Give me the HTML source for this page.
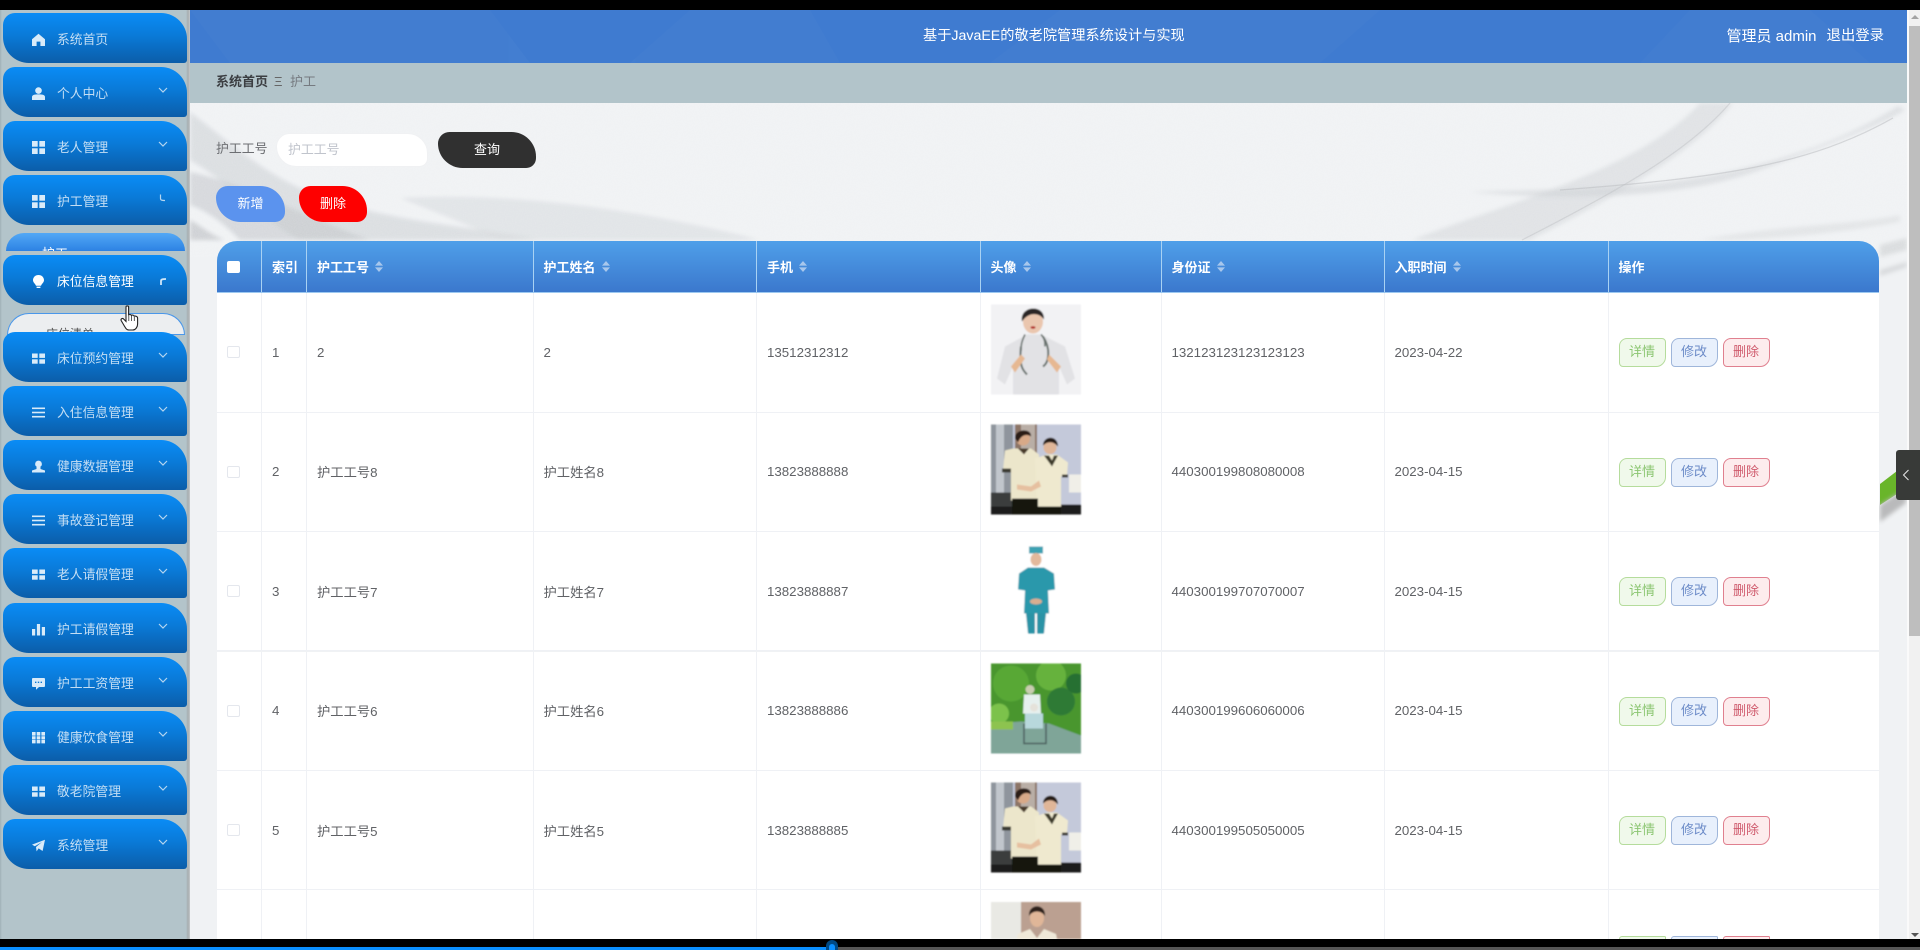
<!DOCTYPE html>
<html lang="zh-CN"><head><meta charset="utf-8"><title>护工</title>
<style>
*{box-sizing:border-box}
html,body{margin:0;padding:0;width:1920px;height:950px;overflow:hidden;background:#000}
body{position:relative;font-family:"Liberation Sans","Noto Sans CJK SC",sans-serif;font-size:13.3px;color:#606266}
.abs{position:absolute}
#side{position:absolute;left:0;top:10px;width:190px;height:929px;background:linear-gradient(90deg,#9fb0b6 0,#b3c4ca 2px,#b3c4ca 186px,#a7adb0 188px,#c4c8ca 190px)}
.m{position:absolute;left:3px;width:184px;height:50px;border-radius:12px 26px 3px 26px;background:linear-gradient(180deg,#0a8cf6 0,#0a7ad8 45%,#0b5da9 100%);color:#c4def4;font-size:12.8px;line-height:54px;padding-left:54px;white-space:nowrap}
.m svg.i{position:absolute;left:29px;top:20px;width:13px;height:13px;fill:#d9ebf9}
.m svg.c{position:absolute;left:155px;top:18px;width:10px;height:10px;fill:none;stroke:#b5d6f0;stroke-width:1.2}
.sub{position:absolute;overflow:hidden;font-size:13px}
#head{position:absolute;left:190px;top:10px;width:1717px;height:53px;background:#3f7bd0;overflow:hidden}
#crumb{position:absolute;left:190px;top:63px;width:1717px;height:40px;background:#b2c4ca}
#bg{position:absolute;left:190px;top:103px;width:1717px;height:836px;background:#f0f2f4;overflow:hidden}
.row,.hd{position:absolute;left:217px;width:1662px;display:grid;grid-template-columns:45px 45px 226.5px 223.5px 223.5px 181px 223px 224px 270.5px}
.row{height:119.4px;background:#fff;border-bottom:1px solid #eff1f5}
.row>div{border-right:1px solid #eff1f5;display:flex;align-items:center;padding-left:10px;white-space:nowrap}
.row>div:last-child{border-right:0;gap:5px;padding-top:1px}
.row.last{height:48.7px;border-bottom:0;overflow:hidden}
.row.last>div{align-items:flex-start;padding-top:0}
.row.last>div:last-child{padding-top:45.7px}
.row.last .b{height:3px;border-bottom:0;border-radius:8px 4px 0 0}
.hd{top:241px;height:52.3px;border-radius:20px 20px 0 0;background:linear-gradient(180deg,#4f9fe9 0,#3b78cd 100%);border-bottom:1px solid #9cc8f0;overflow:hidden;color:#fff;font-weight:bold;font-size:13px}
.hd>div{border-right:1px solid #a9d2f3;display:flex;align-items:center;padding-left:10px;white-space:nowrap}
.hd>div:last-child{border-right:0}
.s{display:inline-block;width:8px;height:11px;margin-left:6px}
.cb{width:13px;height:12px;border:1px solid #e4e7ed;border-radius:2px;background:#fff;display:block}
.hcb{background:#fff;border-color:#fff}
.b{display:block;width:47px;height:29px;border:1px solid;border-radius:8px 4px 10px 4px;text-align:center;line-height:26px;font-size:13px}
.g{background:#f0f9eb;border-color:#b5dc9c;color:#8cc672}
.u{background:#e8f0fc;border-color:#9fb6da;color:#6c8bc8}
.r{background:#fdeced;border-color:#e0808f;color:#cf5a6c}
.row svg.p{display:block;width:90px;height:90px;transform:translateY(-2.5px)}
.btn{position:absolute;height:36px;color:#fff;text-align:center;line-height:36px;font-size:13px;border-radius:14px 30px 12px 30px}
</style></head><body>
<svg width="0" height="0" style="position:absolute">
<defs>
<filter id="bl"><feGaussianBlur stdDeviation="0.7"/></filter>
<filter id="w"><feGaussianBlur stdDeviation="2.2"/></filter>
<filter id="n"><feTurbulence type="fractalNoise" baseFrequency="0.9" numOctaves="2" seed="4"/><feColorMatrix values="0 0 0 0 1  0 0 0 0 1  0 0 0 0 1  0 0 0 .55 -.12"/></filter>
<symbol id="grid" viewBox="0 0 13 13"><rect x="0" y="0" width="5.7" height="5.7"/><rect x="7.3" y="0" width="5.7" height="5.7"/><rect x="0" y="7.3" width="5.7" height="5.7"/><rect x="7.3" y="7.3" width="5.7" height="5.7"/></symbol>
<symbol id="wide" viewBox="0 0 13 13"><rect x="0" y="1.5" width="5.7" height="4.4"/><rect x="7.3" y="1.5" width="5.7" height="4.4"/><rect x="0" y="7.3" width="5.7" height="4.4"/><rect x="7.3" y="7.3" width="5.7" height="4.4"/></symbol>
<symbol id="ops" viewBox="0 0 13 13"><rect x="0" y="1.5" width="13" height="1.6"/><rect x="0" y="5.7" width="13" height="1.6"/><rect x="0" y="9.9" width="13" height="1.6"/></symbol>
<symbol id="couple" viewBox="0 0 90 90">
<rect width="90" height="90" fill="#c4c9da"/><rect width="22" height="90" fill="#8f959d"/><rect x="5" width="8" height="80" fill="#c1c6cc"/><rect x="24" width="22" height="35" fill="#8c7466"/><rect x="30" width="14" height="30" fill="#b9aea6"/>
<rect x="78" y="50" width="12" height="18" fill="#f0efe8"/>
<rect x="0" y="80" width="90" height="10" fill="#1d1e1c"/><rect x="0" y="68" width="22" height="14" fill="#3a3d3c"/>
<path d="M14 26 L22 24 L40 24 L48 30 L47 76 L20 76 L20 46 L12 46Z" fill="#ece6cb"/>
<rect x="11" y="44" width="9" height="4" fill="#3a3a30"/>
<path d="M44 34 L56 30 L66 30 L77 38 L76 51 L70 52 L70 82 L46 82Z" fill="#efe9cf"/>
<rect x="71" y="50" width="6" height="3" fill="#3a3a30"/>
<path d="M53 31 L61 42 L67 31 L63 31 L61 36 L58 31Z" fill="#3d3b2c"/>
<path d="M27 24 L33 30 L38 24Z" fill="#4a3b2c"/>
<circle cx="32" cy="14" r="7" fill="#d8a988"/><path d="M24 14 C23 4 41 3 40 12 C36 9 30 10 27 18Z" fill="#2c1d18"/>
<circle cx="59" cy="23" r="6.5" fill="#e0b698"/><path d="M52 21 C52 11 67 10 67 22 C63 17 57 16 52 21Z" fill="#261c18"/>
<rect x="21" y="74" width="26" height="16" fill="#121210"/><rect x="46" y="82" width="24" height="8" fill="#121210"/>
<path d="M26 60 L40 62 L48 56 L50 62 L40 67 L26 65Z" fill="#e6c0a0"/>
</symbol>
</defs>
</svg>

<!-- content background -->
<div id="bg">
<svg width="1717" height="836" viewBox="190 103 1717 836" style="position:absolute;left:0;top:0">
<g filter="url(#w)" opacity=".95">
<path d="M190 112 C240 150 270 180 330 200 C400 222 460 225 540 240 L300 240 C270 225 240 190 190 160Z" fill="#c9ccd0" opacity=".55"/>
<path d="M190 172 C250 185 300 215 370 240 L240 240 C225 225 210 212 190 205Z" fill="#c2c5c9" opacity=".6"/>
<path d="M190 220 C200 225 210 235 225 240 L190 240Z" fill="#b5b8bc" opacity=".6"/>
<path d="M400 198 C520 192 640 210 760 240 L500 240 C470 225 430 210 400 198Z" fill="#d6d9dc" opacity=".6"/>
</g>
<g filter="url(#w)" opacity=".7">
<path d="M1733 103 C1700 145 1640 185 1530 240 L1412 240 C1500 205 1640 170 1700 103Z" fill="#c5c8cc" opacity=".55"/>
<path d="M1898 106 C1830 150 1740 175 1640 185 C1590 190 1520 190 1470 192 C1560 200 1680 200 1760 170 C1830 145 1880 125 1905 110Z" fill="#bfc2c6" opacity=".55"/>
<path d="M1880 245 L1907 238 L1907 250 L1880 257Z" fill="#b6b9bc" opacity=".55"/>
<path d="M1880 270 L1907 262 L1907 267 L1880 276Z" fill="#b0b3b6" opacity=".55"/>
<path d="M1700 240 C1780 225 1850 225 1900 215 L1900 222 C1830 235 1780 238 1730 240Z" fill="#d0d3d6" opacity=".6"/>
</g>
<path d="M1730 103 C1690 150 1620 190 1522 240" stroke="#bdc0c4" stroke-width="1.2" fill="none" opacity=".5"/>
<path d="M1893 118 C1810 165 1720 178 1560 190" stroke="#b5b8bc" stroke-width="1.2" fill="none" opacity=".5"/>
<path d="M1880 484 L1897 471 L1897 494 L1880 505Z" fill="#69b52a"/>
<path d="M1880 505 L1906 488 L1906 503 L1880 522Z" fill="#b9babb" filter="url(#w)"/>
<rect x="190" y="103" width="1717" height="140" filter="url(#n)" opacity=".35"/>
</svg>
</div>

<!-- header -->
<div id="head">
<svg width="1717" height="53" style="position:absolute;left:0;top:0"><g fill="#fff" opacity=".02"><path d="M0 0H300L340 53H40Z"/><path d="M500 0H620L650 53H440Z"/><path d="M870 0H1190L1130 53H800Z"/><path d="M1500 0H1620L1680 53H1450Z"/></g></svg>
<div class="abs" style="left:733px;top:0;line-height:53px;font-size:14.2px;color:#fff;white-space:nowrap">基于JavaEE的敬老院管理系统设计与实现</div>
<div class="abs" style="left:1536.5px;top:0;line-height:53px;font-size:15px;color:#fff;white-space:nowrap">管理员 admin</div>
<div class="abs" style="left:1636.5px;top:0;line-height:53px;font-size:14.4px;color:#fff;white-space:nowrap">退出登录</div>
</div>
<div id="crumb">
<span class="abs" style="left:26px;top:0;line-height:38px;font-size:13px;font-weight:bold;color:#3b3e42;white-space:nowrap">系统首页</span>
<span class="abs" style="left:84px;top:0;line-height:38px;font-size:13px;color:#666">Ξ</span>
<span class="abs" style="left:100px;top:0;line-height:38px;font-size:13px;color:#757a80;white-space:nowrap">护工</span>
</div>

<!-- search -->
<span class="abs" style="left:216px;top:140px;line-height:18px;font-size:12.9px;color:#6c6e72">护工工号</span>
<div class="abs" style="left:276px;top:133px;width:152px;height:34px;background:#fff;border-radius:16px 24px 10px 24px;border:1px solid #f0f1f3;color:#c0c4cc;font-size:12.9px;line-height:32px;padding-left:11px">护工工号</div>
<div class="btn" style="left:438px;top:132px;width:98px;background:#303030">查询</div>
<div class="btn" style="left:216px;top:186px;width:69px;background:#5b93ee">新增</div>
<div class="btn" style="left:299px;top:186px;width:68px;background:#fe0000">删除</div>

<!-- table head -->
<div class="hd">
<div><i class="cb hcb"></i></div>
<div>索引</div>
<div>护工工号<svg class="s" viewBox="0 0 8 11"><path d="M4 0L8 4.6H0ZM4 11L0 6.4H8Z" fill="#a8c7ec"/></svg></div>
<div>护工姓名<svg class="s" viewBox="0 0 8 11"><path d="M4 0L8 4.6H0ZM4 11L0 6.4H8Z" fill="#a8c7ec"/></svg></div>
<div>手机<svg class="s" viewBox="0 0 8 11"><path d="M4 0L8 4.6H0ZM4 11L0 6.4H8Z" fill="#a8c7ec"/></svg></div>
<div>头像<svg class="s" viewBox="0 0 8 11"><path d="M4 0L8 4.6H0ZM4 11L0 6.4H8Z" fill="#a8c7ec"/></svg></div>
<div>身份证<svg class="s" viewBox="0 0 8 11"><path d="M4 0L8 4.6H0ZM4 11L0 6.4H8Z" fill="#a8c7ec"/></svg></div>
<div>入职时间<svg class="s" viewBox="0 0 8 11"><path d="M4 0L8 4.6H0ZM4 11L0 6.4H8Z" fill="#a8c7ec"/></svg></div>
<div>操作</div>
</div>

<!-- rows -->
<div class="row" style="top:293.3px">
<div><i class="cb"></i></div><div>1</div><div>2</div><div>2</div><div>13512312312</div>
<div><svg class="p" viewBox="0 0 90 90" filter="url(#bl)"><rect width="90" height="90" fill="#f2f2f4"/><path d="M36 30 L14 42 L6 74 L14 80 L22 62 L22 90 L68 90 L68 62 L76 80 L84 74 L74 42 L50 30Z" fill="#e2e2e5"/><path d="M30 42 C28 62 32 66 36 70 M52 32 C60 44 58 58 52 62" stroke="#66706c" stroke-width="2" fill="none"/><path d="M34 30 C30 38 30 42 30 46 M50 30 C54 34 54 38 54 42" stroke="#66706c" stroke-width="1.6" fill="none"/><path d="M20 62 L30 50 L34 54 L24 68Z M70 62 L58 50 L56 55 L66 68Z" fill="#e6b892"/><ellipse cx="42" cy="17" rx="10" ry="12" fill="#eac6ae"/><path d="M31 17 C28 1 54 -1 53 15 C48 8 38 7 31 17Z" fill="#2c2825"/><ellipse cx="42" cy="23" rx="2.5" ry="1.2" fill="#b01a1a"/></svg></div>
<div>132123123123123123</div><div>2023-04-22</div>
<div><a class="b g">详情</a><a class="b u">修改</a><a class="b r">删除</a></div>
</div>
<div class="row" style="top:412.7px">
<div><i class="cb"></i></div><div>2</div><div>护工工号8</div><div>护工姓名8</div><div>13823888888</div>
<div><svg class="p" viewBox="0 0 90 90" filter="url(#bl)"><use href="#couple"/></svg></div>
<div>440300199808080008</div><div>2023-04-15</div>
<div><a class="b g">详情</a><a class="b u">修改</a><a class="b r">删除</a></div>
</div>
<div class="row" style="top:532.1px">
<div><i class="cb"></i></div><div>3</div><div>护工工号7</div><div>护工姓名7</div><div>13823888887</div>
<div><svg class="p" viewBox="0 0 90 90" filter="url(#bl)"><rect width="90" height="90" fill="#fff"/><path d="M38 3 L52 3 L52 10 L38 10Z" fill="#3da2b3"/><ellipse cx="45" cy="16" rx="5.5" ry="6.5" fill="#e3b99c"/><path d="M37 24 L53 24 L63 30 L64 46 L57 47 L58 70 L33 70 L34 47 L27 46 L28 30Z" fill="#2a98ab"/><path d="M35 70 L44 70 L44 90 L37 90Z M46 70 L55 70 L53 90 L46 90Z" fill="#2a93a6"/><ellipse cx="45" cy="58" rx="6" ry="3" fill="#d9ae90"/></svg></div>
<div>440300199707070007</div><div>2023-04-15</div>
<div><a class="b g">详情</a><a class="b u">修改</a><a class="b r">删除</a></div>
</div>
<div class="row" style="top:651.5px">
<div><i class="cb"></i></div><div>4</div><div>护工工号6</div><div>护工姓名6</div><div>13823888886</div>
<div><svg class="p" viewBox="0 0 90 90" filter="url(#bl)"><rect width="90" height="90" fill="#48962f"/><circle cx="20" cy="20" r="18" fill="#58a836"/><circle cx="60" cy="12" r="15" fill="#66b23e"/><circle cx="70" cy="38" r="14" fill="#2f7a36"/><circle cx="8" cy="50" r="10" fill="#7cc24c"/><circle cx="85" cy="20" r="10" fill="#286f32"/><path d="M0 60 L30 58 L58 60 L90 72 L90 90 L0 90Z" fill="#7fa598"/><path d="M0 58 H22 V66 H0Z" fill="#8dc34f"/><path d="M33 31 L49 31 L50 50 L32 50Z" fill="#e6f0ee"/><circle cx="39" cy="26" r="4.5" fill="#c9cdb0"/><path d="M34 50 L52 50 L52 65 L34 65Z" fill="#b8d8dc"/><circle cx="43" cy="44" r="4" fill="#e5e2da"/><path d="M33 60 V80 H55 V60" stroke="#4a5e5c" stroke-width="1.5" fill="none"/></svg></div>
<div>440300199606060006</div><div>2023-04-15</div>
<div><a class="b g">详情</a><a class="b u">修改</a><a class="b r">删除</a></div>
</div>
<div class="row" style="top:770.9px">
<div><i class="cb"></i></div><div>5</div><div>护工工号5</div><div>护工姓名5</div><div>13823888885</div>
<div><svg class="p" viewBox="0 0 90 90" filter="url(#bl)"><use href="#couple"/></svg></div>
<div>440300199505050005</div><div>2023-04-15</div>
<div><a class="b g">详情</a><a class="b u">修改</a><a class="b r">删除</a></div>
</div>
<div class="row last" style="top:890.3px">
<div></div><div></div><div></div><div></div><div></div>
<div style="padding-top:11.5px"><svg viewBox="0 0 90 37" width="90" height="37" style="display:block" filter="url(#bl)"><rect width="90" height="37" fill="#e9e9e4"/><rect x="30" width="60" height="37" fill="#bba091"/><ellipse cx="46" cy="16" rx="7" ry="9" fill="#e0b698"/><path d="M38 14 C37 1 55 1 54 14 C50 8 42 8 38 14Z" fill="#2e241e"/><path d="M27 32 L39 27 L46 36 L53 27 L65 32 L66 37 L26 37Z" fill="#efe8d8"/></svg></div>
<div></div><div></div>
<div><a class="b g"></a><a class="b u"></a><a class="b r"></a></div>
</div>

<!-- sidebar -->
<div id="side"></div>
<div class="sub" style="left:6px;top:233px;width:179px;height:18px;border-radius:22px 22px 0 0;background:linear-gradient(180deg,#52a8f6,#2d82e3);color:#fff"><span class="abs" style="left:36px;top:12px;line-height:18px">护工</span></div>
<div class="sub" style="left:7px;top:313px;width:178px;height:22px;border-radius:22px 22px 0 0;background:#eceef0;border:1px solid #4a97ea;color:#555;font-size:12px"><span class="abs" style="left:38px;top:11px;line-height:18px">床位清单</span></div>

<div class="m" style="top:13px"><svg class="i" viewBox="0 0 13 13"><path d="M6.5 .8L13 6.2V13H8.4V8.6H4.6V13H0V6.2Z"/></svg>系统首页</div>
<div class="m" style="top:67px"><svg class="i" viewBox="0 0 13 13"><circle cx="6.5" cy="3.6" r="3.3"/><path d="M0 13V10C0 8 2.5 7.4 6.5 7.4S13 8 13 10V13Z"/></svg>个人中心<svg class="c" viewBox="0 0 10 10"><path d="M1 3L5 7L9 3"/></svg></div>
<div class="m" style="top:121px"><svg class="i"><use href="#grid"/></svg>老人管理<svg class="c" viewBox="0 0 10 10"><path d="M1 3L5 7L9 3"/></svg></div>
<div class="m" style="top:175px"><svg class="i"><use href="#grid"/></svg>护工管理<svg class="c" viewBox="0 0 10 10"><path d="M2.5 1.5V5.5C2.5 7 3.5 7.5 7 7.5"/></svg></div>
<div class="m" style="top:255px;color:#fff"><svg class="i" viewBox="0 0 13 13" style="fill:#fff"><path d="M6.5 0C9.8 0 12 2.4 12 5.2C12 7.5 9.6 8.6 9 10.8H4C3.4 8.6 1 7.5 1 5.2C1 2.4 3.2 0 6.5 0ZM4.6 11.6H8.4V13H4.6Z"/></svg>床位信息管理<svg class="c" viewBox="0 0 10 10" style="stroke-width:1.8;top:22px;left:156px;stroke:#d0e6f8"><path d="M2 8V4C2 2.6 3 2 7 2"/></svg></div>
<div class="m" style="top:332px"><svg class="i"><use href="#wide"/></svg>床位预约管理<svg class="c" viewBox="0 0 10 10"><path d="M1 3L5 7L9 3"/></svg></div>
<div class="m" style="top:386.1px"><svg class="i"><use href="#ops"/></svg>入住信息管理<svg class="c" viewBox="0 0 10 10"><path d="M1 3L5 7L9 3"/></svg></div>
<div class="m" style="top:440.2px"><svg class="i" viewBox="0 0 13 13"><circle cx="6.5" cy="4" r="3.4"/><path d="M4.5 7H8.5V9L13 10.5V12.5H0V10.5L4.5 9Z"/></svg>健康数据管理<svg class="c" viewBox="0 0 10 10"><path d="M1 3L5 7L9 3"/></svg></div>
<div class="m" style="top:494.3px"><svg class="i"><use href="#ops"/></svg>事故登记管理<svg class="c" viewBox="0 0 10 10"><path d="M1 3L5 7L9 3"/></svg></div>
<div class="m" style="top:548.4px"><svg class="i"><use href="#wide"/></svg>老人请假管理<svg class="c" viewBox="0 0 10 10"><path d="M1 3L5 7L9 3"/></svg></div>
<div class="m" style="top:602.5px"><svg class="i" viewBox="0 0 13 13"><rect x="0" y="6" width="3.2" height="6.5"/><rect x="4.9" y="1" width="3.2" height="11.5"/><rect x="9.8" y="4" width="3.2" height="8.5"/></svg>护工请假管理<svg class="c" viewBox="0 0 10 10"><path d="M1 3L5 7L9 3"/></svg></div>
<div class="m" style="top:656.6px"><svg class="i" viewBox="0 0 13 13"><path fill-rule="evenodd" d="M1 1H12C12.6 1 13 1.4 13 2V9C13 9.6 12.6 10 12 10H7L4 12.8V10H1C.4 10 0 9.6 0 9V2C0 1.4 .4 1 1 1ZM3 4.6V6H4.4V4.6ZM5.8 4.6V6H7.2V4.6ZM8.6 4.6V6H10V4.6Z"/></svg>护工工资管理<svg class="c" viewBox="0 0 10 10"><path d="M1 3L5 7L9 3"/></svg></div>
<div class="m" style="top:710.7px"><svg class="i" viewBox="0 0 13 13"><path d="M0 1H3.6V4.6H0ZM4.7 1H8.3V4.6H4.7ZM9.4 1H13V4.6H9.4ZM0 5.2H3.6V8.2H0ZM4.7 5.2H8.3V8.2H4.7ZM9.4 5.2H13V8.2H9.4ZM0 8.8H3.6V12.4H0ZM4.7 8.8H8.3V12.4H4.7ZM9.4 8.8H13V12.4H9.4Z"/></svg>健康饮食管理<svg class="c" viewBox="0 0 10 10"><path d="M1 3L5 7L9 3"/></svg></div>
<div class="m" style="top:764.8px"><svg class="i"><use href="#wide"/></svg>敬老院管理<svg class="c" viewBox="0 0 10 10"><path d="M1 3L5 7L9 3"/></svg></div>
<div class="m" style="top:818.9px"><svg class="i" viewBox="0 0 13 13"><path d="M13 .8L10.6 12L6.6 9.4L4.6 12.4L4 8L10 3L2.8 7.2L0 5.6Z"/></svg>系统管理<svg class="c" viewBox="0 0 10 10"><path d="M1 3L5 7L9 3"/></svg></div>

<!-- cursor -->
<svg class="abs" style="left:120px;top:305px" width="20" height="26" viewBox="0 0 20 26"><path d="M6 2C6 .6 8.6 .6 8.6 2V10C9.5 9.3 11 9.4 11.4 10.4C12.4 9.8 13.8 10 14.2 11.2C15.4 10.8 17.6 11.4 17.6 13V19C17.6 22 15.6 25 12.6 25H9C6.4 25 5.6 23 4 20.4L1.2 15.6C.4 14 2.4 12.8 3.6 14L6 16.4Z" fill="#fff" stroke="#222" stroke-width="1.1"/><path d="M8.8 11V16M11.5 11V16M14.3 12V16" stroke="#333" stroke-width=".8"/></svg>

<!-- scrollbar -->
<div class="abs" style="left:1907px;top:10px;width:13px;height:929px;background:linear-gradient(90deg,#fafafa 0,#fafafa 2px,#f1f1f1 2px)"></div>
<div class="abs" style="left:1909px;top:26px;width:11px;height:610px;background:#bebebe"></div>
<div class="abs" style="left:1911px;top:15px;width:0;height:0;border-left:4px solid transparent;border-right:4px solid transparent;border-bottom:4px solid #a3a3a3"></div>
<div class="abs" style="left:1911px;top:933px;width:0;height:0;border-left:4px solid transparent;border-right:4px solid transparent;border-top:4px solid #555"></div>

<!-- drawer button -->
<div class="abs" style="left:1896px;top:450px;width:24px;height:50px;background:#383a38;border-radius:3px 0 0 3px">
<svg class="abs" style="left:6px;top:19px" width="8" height="12" viewBox="0 0 8 12"><path d="M6.5 1L1.5 6L6.5 11" fill="none" stroke="#e8e8e8" stroke-width="1"/></svg>
</div>

<!-- video bars -->
<div class="abs" style="left:0;top:0;width:1920px;height:10px;background:#000"></div>
<div class="abs" style="left:0;top:939px;width:1920px;height:11px;background:#000;overflow:hidden">
<div class="abs" style="left:0;top:8px;width:832px;height:3px;background:#0a8fff"></div>
<div class="abs" style="left:832px;top:8px;width:1088px;height:3px;background:#565656"></div>
<div class="abs" style="left:826px;top:1px;width:12px;height:10px;border-radius:6px 6px 0 0;background:#004a85"></div>
<div class="abs" style="left:829px;top:5px;width:6px;height:6px;border-radius:3px 3px 0 0;background:#0a8fff"></div>
</div>
</body></html>
